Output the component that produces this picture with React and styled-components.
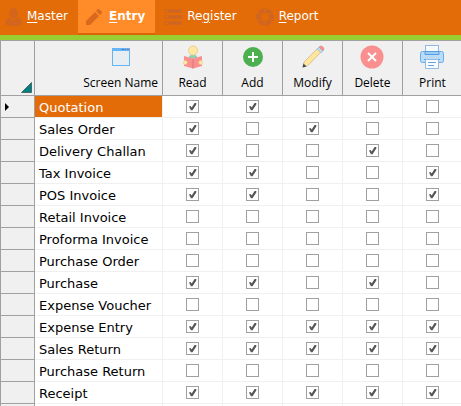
import React from 'react';
import styled, { createGlobalStyle } from 'styled-components';

const GlobalStyle = createGlobalStyle`
    * {
        box-sizing: border-box;
    }

    body {
        margin: 0;
        background: #fff;
        overflow: hidden;
        font-family: Verdana, "DejaVu Sans", sans-serif;
    }
`;

const Nav = styled.nav`
    display: flex;
    height: 40px;
    padding-left: 1px;
    background: #e36c09;
    border-bottom: 5px solid #9acd32;
`;

const NavButton = styled.button`
    display: flex;
    align-items: center;
    gap: ${({ $active }) => ($active ? '7px' : '5px')};
    height: 35px;
    padding: 0 10px 0 ${({ $active }) => ($active ? '8px' : '4px')};
    margin-right: ${({ $wide }) => ($wide ? '5px' : '0')};
    border: 0;
    border-bottom: 2px solid ${({ $active }) => ($active ? '#d96508' : '#e36c09')};
    background: ${({ $active }) => ($active ? '#ff8c28' : 'transparent')};
    color: #fff;
    font-family: inherit;
    font-size: 12px;
    font-weight: ${({ $active }) => ($active ? 700 : 400)};
    line-height: 16px;

    svg {
        flex: none;
    }

    span {
        padding-bottom: 2px;
    }

    u {
        text-underline-offset: 2px;
    }
`;

const Grid = styled.table`
    width: 100%;
    table-layout: fixed;
    border-spacing: 0;
    border-top: 1px solid #a0a0a0;
    border-left: 1px solid #a0a0a0;
`;

const Col = styled.col`
    width: ${({ $width }) => $width}px;
`;

const HeadCell = styled.th`
    height: 55px;
    padding: 4px 4px 3px;
    background: #f0f0f0;
    border-right: 1px solid #a0a0a0;
    border-bottom: 1px solid #a0a0a0;
    font-family: "Segoe UI", "Open Sans", sans-serif;
    font-size: 12px;
    font-weight: 400;
    line-height: 16px;
    text-align: ${({ $right }) => ($right ? 'right' : 'center')};
    vertical-align: top;
    white-space: nowrap;
`;

const Corner = styled.td`
    padding: 0 2px 2px 0;
    background: #f0f0f0;
    border-right: 1px solid #a0a0a0;
    border-bottom: 1px solid #a0a0a0;
    text-align: right;
    vertical-align: bottom;

    svg {
        display: block;
        margin-left: auto;
    }
`;

const HeadLabel = styled.span`
    display: inline-flex;
    flex-direction: column;
    align-items: center;
    gap: 6px;
`;

const IconBox = styled.span`
    display: flex;
    align-items: center;
    justify-content: center;
    height: 24px;
`;

const Marker = styled.td`
    height: 22px;
    padding: 0 0 0 3px;
    background: #f0f0f0;
    border-right: 1px solid #a0a0a0;
    border-bottom: 1px solid #a0a0a0;

    svg {
        display: block;
    }
`;

const NameCell = styled.th`
    height: 22px;
    padding: 3px 0 0 4px;
    background: ${({ $selected }) => ($selected ? '#e36c09' : '#fff')};
    background-clip: padding-box;
    border-right: 1px solid #f0f0f0;
    border-bottom: 1px solid #f0f0f0;
    color: ${({ $selected }) => ($selected ? '#fff' : '#000')};
    font-size: 13px;
    font-weight: 400;
    line-height: 18px;
    text-align: left;
    white-space: nowrap;
`;

const CheckCell = styled.td`
    height: 22px;
    padding: 0;
    border-right: 1px solid #f0f0f0;
    border-bottom: 1px solid #f0f0f0;
`;

const tick = "url(\"data:image/svg+xml,%3Csvg xmlns='http://www.w3.org/2000/svg' viewBox='0 0 11 11'%3E%3Cpath d='M2 5.4L3.6 4.900L4.700 6.500L7.600 2H9.300V3.400L5.500 9.200H3.900Z' fill='%23555'/%3E%3C/svg%3E\")";

const Checkbox = styled.input.attrs({ type: 'checkbox' })`
    appearance: none;
    display: block;
    width: 13px;
    height: 13px;
    margin: 0 auto;
    border: 1px solid #a0a0a0;
    background: #fff;

    &:checked {
        background-image: ${tick};
    }
`;

const UserIcon = () => (
    <svg width="17" height="18" viewBox="0 0 17 18" fill="#d3651c">
        <path d="M8.500 0C11.300 0 13 2 13 5C13 8 11.300 10.500 8.500 10.500S4 8 4 5C4 2 5.700 0 8.500 0Z" />
        <path d="M4.500 9.500C5.500 11.300 7 12 8.500 12S11.500 11.300 12.500 9.500C15.500 10.500 17 12 17 16C15 17.500 12 18 8.500 18S2 17.500 0 16C0 12 1.500 10.500 4.500 9.500Z" />
    </svg>
);

const EditIcon = () => (
    <svg width="16" height="16" viewBox="0 0 16 16" fill="#d9691c">
        <path d="M0 16V12L9 3L13 7L4 16ZM10 2L12 0H13L16 3V4L14 6Z" />
    </svg>
);

const ListIcon = () => (
    <svg width="18" height="16" viewBox="0 0 18 16">
        {[0, 6, 12].map(y => (
            <g key={y}>
                <rect y={y} width="18" height="4" rx="1" fill="#d3681c" />
                <rect x="2" y={y + 1} width="2" height="2" fill="#e36c09" />
                <path d={`M6 ${y + 2}H16`} stroke="#c9652a" />
            </g>
        ))}
    </svg>
);

const ApertureIcon = () => (
    <svg width="18" height="18" viewBox="0 0 18 18">
        <circle cx="9" cy="9" r="8.800" fill="#cf6522" />
        <g stroke="#e36c09" strokeWidth="1">
            {[0, 60, 120, 180, 240, 300].map(a => (
                <path key={a} d="M7 5.800H18" transform={`rotate(${a} 9 9)`} />
            ))}
        </g>
        <path d="M7.200 5.800H10.800L12.700 9L10.800 12.200H7.200L5.300 9Z" fill="#e36c09" />
    </svg>
);

const WindowIcon = () => (
    <svg width="18" height="18" viewBox="0 0 18 18">
        <rect x=".5" y=".5" width="17" height="17" fill="#e8edf2" stroke="#64b5f6" />
        <path d="M0 0H18V3H0Z" fill="#64b5f6" />
        <path d="M10 1H12V2H10ZM13 1H14V2H13Z" fill="#3c7fc0" />
        <path d="M15 1H17V2H15Z" fill="#e05a6a" />
    </svg>
);

const ReadIcon = () => (
    <svg width="20" height="24" viewBox="0 0 20 24">
        <path d="M6 11L10 9L14 11V13H6Z" fill="#8fd0b5" />
        <circle cx="10" cy="5.500" r="4.500" fill="#ffe9a3" stroke="#e5cf94" />
        <path d="M1 11L10 13.500L19 11V21L10 23.500L1 21Z" fill="#f98f8f" />
        <path d="M10 13.500V23.500" stroke="#df7777" />
        <circle cx="2.200" cy="17.500" r="2" fill="#ffe9a3" stroke="#e5cf94" strokeWidth=".6" />
        <circle cx="17.800" cy="17.500" r="2" fill="#ffe9a3" stroke="#e5cf94" strokeWidth=".6" />
    </svg>
);

const AddIcon = () => (
    <svg width="20" height="20" viewBox="0 0 20 20">
        <circle cx="10" cy="10" r="10" fill="#4caf50" />
        <path d="M10 5V15M5 10H15" stroke="#fff" strokeWidth="2" />
    </svg>
);

const PencilIcon = () => (
    <svg width="24" height="24" viewBox="0 0 24 24">
        <path d="M3 17L17 3L20.500 6.500L7 20.500L2 22Z" fill="#ffe69a" stroke="#cdb98a" strokeWidth=".8" />
        <path d="M16 4L18 2L22 6L20 8Z" fill="#b9dcf3" stroke="#8cadc5" strokeWidth=".5" />
        <path d="M18 2L19.500 1C21 .5 23.500 3 23 4.500L22 6Z" fill="#f98f8f" stroke="#ca8a90" strokeWidth=".5" />
        <path d="M2.500 18.500L5.500 21.500L1.500 22.500Z" fill="#40464c" />
    </svg>
);

const DeleteIcon = () => (
    <svg width="24" height="24" viewBox="0 0 24 24">
        <circle cx="12" cy="12" r="11.500" fill="#f98f8f" />
        <path d="M8 8L16 16M16 8L8 16" stroke="#fff" strokeWidth="2" />
    </svg>
);

const PrintIcon = () => (
    <svg width="24" height="24" viewBox="0 0 24 24">
        <rect x="5.500" y=".5" width="13" height="8" fill="#f5faff" stroke="#94b9dc" />
        <rect x=".5" y="6.500" width="23" height="11" rx="2" fill="#b8dcfa" stroke="#69abe5" />
        <path d="M5 9.500V6.500H19V9.500Z" fill="#9ccdf6" stroke="#5b9cda" />
        <path d="M4 14.500H20" stroke="#5b9cda" />
        <path d="M5.500 14.500H18.500V23.500H5.500Z" fill="#f8fbff" stroke="#94b9dc" />
        <path d="M8 17.500H16M8 20.500H14" stroke="#6aa6de" />
    </svg>
);

const actions = [
    { name: 'Read', Icon: ReadIcon },
    { name: 'Add', Icon: AddIcon },
    { name: 'Modify', Icon: PencilIcon },
    { name: 'Delete', Icon: DeleteIcon },
    { name: 'Print', Icon: PrintIcon },
];

// Rights are in the same order as the actions
const screens = [
    { name: 'Quotation', rights: [1, 1, 0, 0, 0] },
    { name: 'Sales Order', rights: [1, 0, 1, 0, 0] },
    { name: 'Delivery Challan', rights: [1, 0, 0, 1, 0] },
    { name: 'Tax Invoice', rights: [1, 1, 0, 0, 1] },
    { name: 'POS Invoice', rights: [1, 1, 0, 0, 1] },
    { name: 'Retail Invoice', rights: [0, 0, 0, 0, 0] },
    { name: 'Proforma Invoice', rights: [0, 0, 0, 0, 0] },
    { name: 'Purchase Order', rights: [0, 0, 0, 0, 0] },
    { name: 'Purchase', rights: [1, 1, 0, 1, 0] },
    { name: 'Expense Voucher', rights: [0, 0, 0, 0, 0] },
    { name: 'Expense Entry', rights: [1, 1, 1, 1, 1] },
    { name: 'Sales Return', rights: [1, 1, 1, 1, 1] },
    { name: 'Purchase Return', rights: [0, 0, 0, 0, 0] },
    { name: 'Receipt', rights: [1, 1, 1, 1, 1] },
];

const ScreenRow = ({ screen: { name, rights }, selected }) => (
    <tr>
        <Marker>
            {selected && (
                <svg width="5" height="8" viewBox="0 0 5 8"><path d="M1 0L5 4L1 8Z" /></svg>
            )}
        </Marker>
        <NameCell scope="row" $selected={selected}>{name}</NameCell>
        {actions.map((action, i) => (
            <CheckCell key={action.name}>
                <Checkbox defaultChecked={!!rights[i]} aria-label={`${action.name} ${name}`} />
            </CheckCell>
        ))}
    </tr>
);

// Blank row that closes the grid
const EmptyRow = () => (
    <tr>
        <Marker />
        <CheckCell />
        {actions.map(({ name }) => <CheckCell key={name} />)}
    </tr>
);

const App = () => (
    <>
        <GlobalStyle />
        <Nav>
            <NavButton><UserIcon /><span><u>M</u>aster</span></NavButton>
            <NavButton $active $wide><EditIcon /><span><u>E</u>ntry</span></NavButton>
            <NavButton $wide><ListIcon /><span>Re<u>g</u>ister</span></NavButton>
            <NavButton><ApertureIcon /><span><u>R</u>eport</span></NavButton>
        </Nav>
        <Grid>
            <colgroup>
                <Col $width={34} />
                <Col $width={128} />
                {actions.map(({ name }) => <Col key={name} $width={60} />)}
            </colgroup>
            <thead>
                <tr>
                    <Corner>
                        <svg width="11" height="11" viewBox="0 0 11 11"><path d="M10.500 .5V10.500H.5Z" fill="#008080" stroke="#4a6a6a" /></svg>
                    </Corner>
                    <HeadCell scope="col" $right>
                        <HeadLabel><IconBox><WindowIcon /></IconBox>Screen Name</HeadLabel>
                    </HeadCell>
                    {actions.map(({ name, Icon }) => (
                        <HeadCell key={name} scope="col">
                            <HeadLabel><IconBox><Icon /></IconBox>{name}</HeadLabel>
                        </HeadCell>
                    ))}
                </tr>
            </thead>
            <tbody>
                {screens.map((screen, i) => (
                    <ScreenRow key={screen.name} screen={screen} selected={i === 0} />
                ))}
                <EmptyRow />
            </tbody>
        </Grid>
    </>
);

export default App;
